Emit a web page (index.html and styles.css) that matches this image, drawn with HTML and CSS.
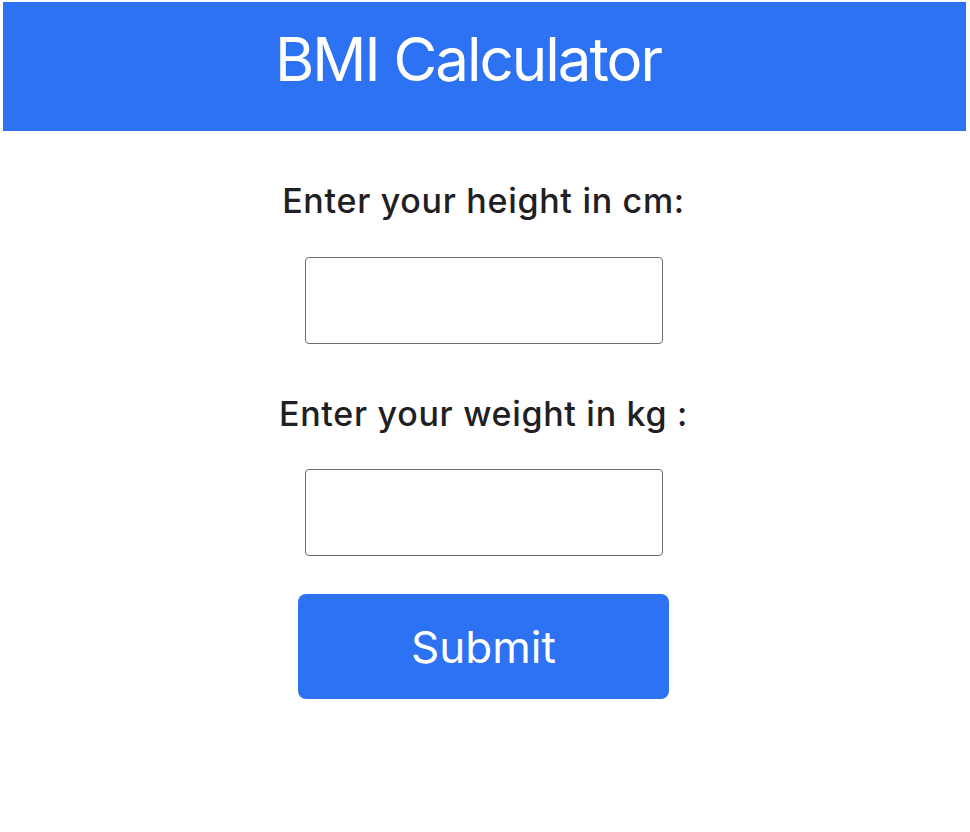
FILE: index.html
```html
<!DOCTYPE html>
<html lang="en">
<head>
<meta charset="utf-8">
<title>BMI Calculator</title>
<link rel="stylesheet" href="styles.css">
</head>
<body>
<header class="app-header">
  <h1 class="app-title">BMI Calculator</h1>
</header>
<main class="form-area">
  <form class="bmi-form">
    <label class="field-label label-height" for="height">Enter your height in cm:</label>
    <input class="field-input input-height" id="height" type="text">
    <label class="field-label label-weight" for="weight">Enter your weight in kg :</label>
    <input class="field-input input-weight" id="weight" type="text">
    <button class="submit-btn" type="button">Submit</button>
  </form>
</main>
</body>
</html>
```
FILE: styles.css
```css
* { box-sizing: border-box; }
html, body { margin: 0; padding: 0; background: #ffffff; }
body {
  font-family: Inter, "Noto Sans", "Liberation Sans", sans-serif;
  color: #1f2023;
}
.app-header {
  margin: 2px 4px 0 3px;
  height: 129px;
  background: #2c72f3;
  padding: 21px 0 0 0;
}
.app-title {
  margin: 0;
  font-size: 60px;
  line-height: 72px;
  font-weight: 400;
  color: #ffffff;
  text-align: center;
  padding-right: 33px;
  letter-spacing: -2px;
}
.form-area {
  padding: 0 6px 0 3px;
}
.bmi-form {
  display: flex;
  flex-direction: column;
  align-items: center;
}
.field-label {
  display: block;
  font-size: 34px;
  line-height: 40px;
  font-weight: 500;
  letter-spacing: 0.7px;
}
.label-height { margin-top: 50px; }
.label-weight { margin-top: 50px; }
.field-input {
  display: block;
  width: 358px;
  height: 87px;
  border: 1.5px solid #6f6f6f;
  border-radius: 4px;
  background: #fff;
  font-size: 30px;
  padding: 0 10px;
  outline: none;
}
.input-height { margin-top: 36px; }
.input-weight { margin-top: 35px; }
.submit-btn {
  margin-top: 38px;
  width: 371px;
  height: 105px;
  border: none;
  border-radius: 8px;
  background: #2c72f3;
  color: #ffffff;
  font-family: Inter, "Noto Sans", "Liberation Sans", sans-serif;
  font-size: 44px;
  font-weight: 400;
  padding: 0;
}
```
